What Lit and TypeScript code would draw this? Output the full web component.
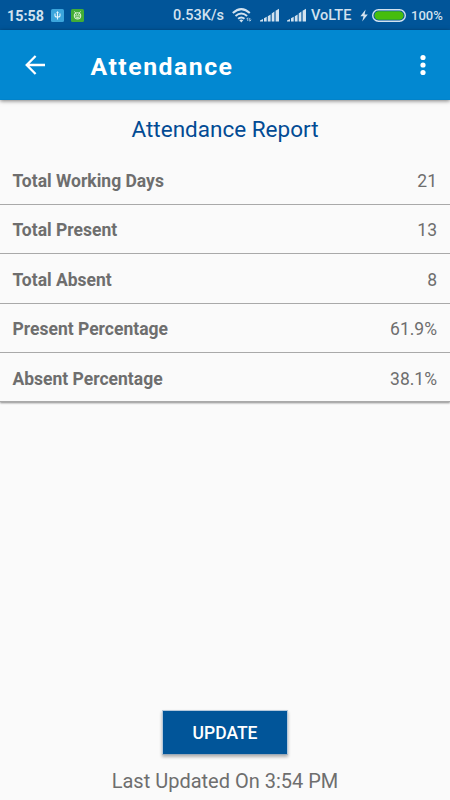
import { LitElement, html, css } from "lit";
import { customElement } from "lit/decorators.js";

interface Row {
  label: string;
  value: string;
}

const ROWS: Row[] = [
  { label: "Total Working Days", value: "21" },
  { label: "Total Present", value: "13" },
  { label: "Total Absent", value: "8" },
  { label: "Present Percentage", value: "61.9%" },
  { label: "Absent Percentage", value: "38.1%" },
];

@customElement("status-bar")
class StatusBar extends LitElement {
  static styles = css`
    :host {
      display: flex;
      align-items: center;
      height: 30px;
      box-sizing: border-box;
      padding: 0 7px;
      background: #015599;
      color: #d2e2ef;
      font: 500 14.5px/30px Roboto, sans-serif;
      white-space: nowrap;
    }
    svg { display: block; flex: none; }
    .time { width: 44px; font-size: 14.3px; font-weight: 700; padding-top: 1px; box-sizing: border-box; }
    .green { margin-left: 7px; }
    .rate { margin-left: 89px; width: 59px; padding-top: 1px; }
    .signal { margin-left: 8px; }
    .volte { margin-left: 5px; width: 49px; padding-top: 1px; }
    .battery { margin-left: 4px; }
    .percent { margin-left: 5px; font-size: 13px; font-weight: 500; padding-top: 2px; }
  `;

  private signal() {
    return html`<svg class="signal" width="19" height="14" viewBox="0 0 19 14" fill="#d2e2ef">
      <path d="M0 13.5V12.6l3-1.7v2.6zM4 13.5V10.3L6.7 8.8v4.7zM7.8 13.5V8.2l2.8-1.6v6.9zM11.7 13.5V5.5l2.7-1.9v9.9zM15.6 13.5V2.8L19 .8v12.7z" />
    </svg>`;
  }

  render() {
    return html`
      <span class="time">15:58</span>
      <svg width="13" height="13" viewBox="0 0 13 13">
        <rect width="13" height="13" rx="1.5" fill="#3ba5dc" />
        <path d="M6.5 3v7.5M4 4.5v2.2q0 1.3 2.5 1.3T9 6.7V4.5" fill="none" stroke="#e6f5fc" stroke-width="1.1" />
        <path d="M5.2 4l1.3-2 1.3 2z" fill="#e6f5fc" />
      </svg>
      <svg class="green" width="13" height="13" viewBox="0 0 13 13">
        <rect width="13" height="13" rx="1.5" fill="#42ad36" />
        <path d="M3.4 2.4l1.4 1.6M9.6 2.4L8.2 4" stroke="#d9f0d5" stroke-width=".9" />
        <ellipse cx="6.5" cy="6.8" rx="3.2" ry="3.1" fill="none" stroke="#d9f0d5" stroke-width="1.1" />
        <path d="M3.4 6.9h6.2M5.2 5.4h.9M7 5.4h.9M5.2 8.5h2.6" stroke="#d9f0d5" stroke-width=".9" />
      </svg>
      <span class="rate">0.53K/s</span>
      <svg width="20" height="15" viewBox="0 0 20 15">
        <g fill="none" stroke="#d2e2ef" stroke-width="2">
          <path d="M.8 5.1Q9.3-2.8 17.8 5.1" />
          <path d="M3.5 8.1q5.8-5.2 11.6 0" />
          <path d="M6.1 10.8q3.2-2.7 6.4 0" />
        </g>
        <path d="M7.3 12.2q2-1.3 4 0l-2 2.2z" fill="#d2e2ef" />
        <path d="M15.8 13V9.8l-1.3 1.4M17.8 10v3.2l1.4-1.4" fill="none" stroke="#a9c8e0" stroke-width="1" />
      </svg>
      ${this.signal()}${this.signal()}
      <span class="volte">VoLTE</span>
      <svg width="8" height="13" viewBox="0 0 8 13"><path d="M5.6.5L.4 7.3h3.1L2.2 12.5 7.8 5.4H4.6z" fill="#d2e2ef" /></svg>
      <svg class="battery" width="34" height="13" viewBox="0 0 34 13">
        <rect x=".7" y=".7" width="32.6" height="11.6" rx="5.8" fill="none" stroke="#d2e2ef" stroke-width="1.4" />
        <rect x="2.4" y="2.3" width="29.2" height="8.4" rx="4.2" fill="#46bd0d" />
      </svg>
      <span class="percent">100%</span>
    `;
  }
}

@customElement("app-root")
class AppRoot extends LitElement {
  static styles = css`
    :host {
      display: flex;
      flex-direction: column;
      height: 800px;
      overflow: hidden;
      background: #fafafa;
      color: #6e6e6e;
      font-family: Roboto, sans-serif;
    }
    .appbar {
      display: flex;
      align-items: center;
      height: 70px;
      flex: none;
      box-sizing: border-box;
      padding: 0 24.5px 0 25px;
      background: #0288d1;
      color: #fff;
      box-shadow: 0 1px 4px rgba(0, 0, 0, 0.5);
    }
    .appbar svg { display: block; flex: none; }
    h1 {
      flex: 1;
      margin: 0 0 0 45.5px;
      padding-top: 3px;
      font-size: 24.8px;
      line-height: 30px;
      font-weight: 700;
      letter-spacing: 1.5px;
    }
    .report { flex: none; box-shadow: 0 1px 2px rgba(0, 0, 0, 0.45); }
    h2 {
      margin: 0;
      height: 55.4px;
      line-height: 59px;
      text-align: center;
      color: #024b94;
      font-size: 22.5px;
      font-weight: 400;
    }
    .row {
      display: flex;
      justify-content: space-between;
      box-sizing: border-box;
      height: 49.4px;
      padding: 1.7px 13px 0 12.5px;
      line-height: 48px;
      font-size: 17.5px;
      border-bottom: 1px solid #a9a9a9;
    }
    .label { font-weight: 700; }
    footer { margin-top: auto; display: flex; flex-direction: column; align-items: center; }
    button {
      width: 126px;
      height: 45px;
      padding: 1px 0 0;
      border: 1px solid #b5c9dc;
      border-bottom-color: #9aa9b8;
      background: #015599;
      color: #fff;
      font: 500 17.5px/38px Roboto, sans-serif;
      box-shadow: 0 2px 3px rgba(0, 0, 0, 0.3);
    }
    .updated { height: 45px; line-height: 52px; font-size: 20px; }
  `;

  render() {
    return html`
      <status-bar></status-bar>
      <header class="appbar">
        <svg width="20" height="20" viewBox="0 0 20 20" fill="none" stroke="#fff" stroke-width="2.3">
          <path d="M20 10H2M10.6 1L1.7 10l8.9 9" />
        </svg>
        <h1>Attendance</h1>
        <svg width="6" height="22" viewBox="0 0 6 22" fill="#fff">
          <circle cx="3" cy="3.5" r="2.6" /><circle cx="3" cy="11" r="2.6" /><circle cx="3" cy="18.5" r="2.6" />
        </svg>
      </header>
      <section class="report">
        <h2>Attendance Report</h2>
        ${ROWS.map((r) => html`<div class="row"><span class="label">${r.label}</span><span>${r.value}</span></div>`)}
      </section>
      <footer>
        <button>UPDATE</button>
        <div class="updated">Last Updated On 3:54 PM</div>
      </footer>
    `;
  }
}
